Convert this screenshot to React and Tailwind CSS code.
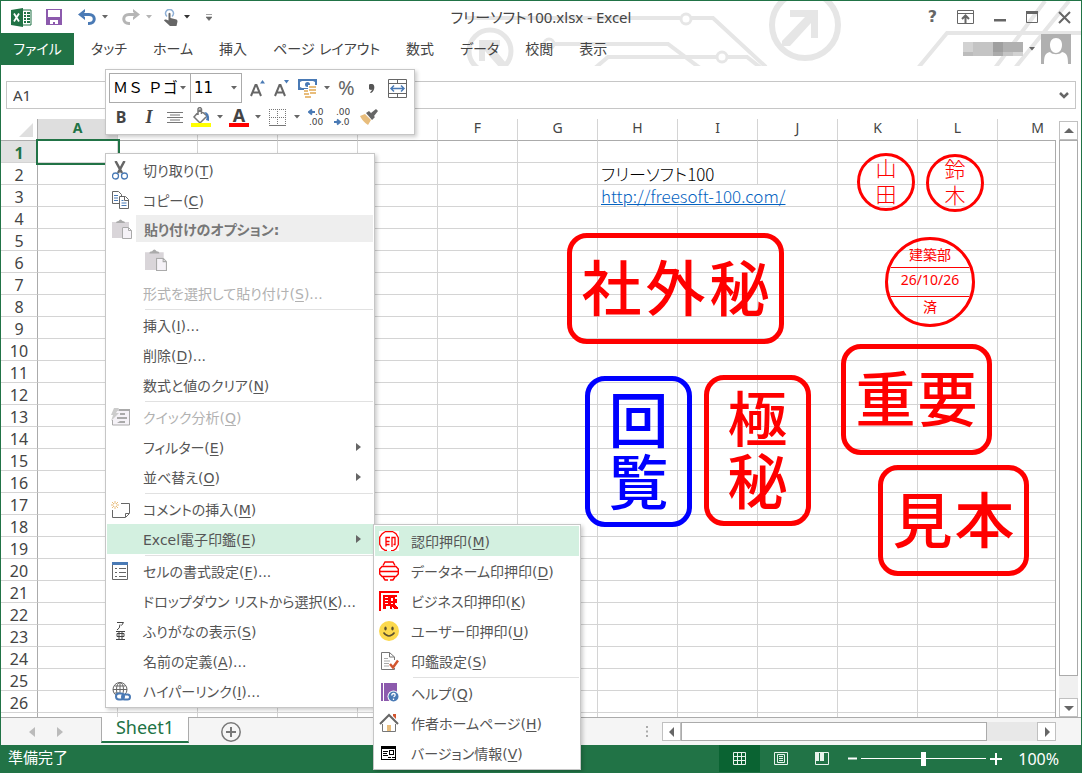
import clsx from 'clsx';
import { useState } from 'react';

const tabs = ['タッチ', 'ホーム', '挿入', 'ページ レイアウト', '数式', 'データ', '校閲', '表示'];
const columns = ['A', 'B', 'C', 'D', 'E', 'F', 'G', 'H', 'I', 'J', 'K', 'L', 'M'];
const rows = Array.from({ length: 26 }, (_, index) => index + 1);

const cells = {
  H2: { span: 2, text: 'フリーソフト100' },
  H3: { span: 3, text: 'http://freesoft-100.com/', href: 'http://freesoft-100.com/' }
};

const cellMenu = [
  { label: '切り取り', hotkey: 'T', icon: CutIcon },
  { label: 'コピー', hotkey: 'C', icon: CopyIcon },
  { heading: '貼り付けのオプション:' },
  { paste: true },
  { label: '形式を選択して貼り付け', hotkey: 'S', more: true, disabled: true },
  { divider: true },
  { label: '挿入', hotkey: 'I', more: true },
  { label: '削除', hotkey: 'D', more: true },
  { label: '数式と値のクリア', hotkey: 'N' },
  { divider: true },
  { label: 'クイック分析', hotkey: 'Q', disabled: true, icon: QuickIcon },
  { label: 'フィルター', hotkey: 'E', submenu: true },
  { label: '並べ替え', hotkey: 'O', submenu: true },
  { divider: true },
  { label: 'コメントの挿入', hotkey: 'M', icon: CommentIcon },
  { label: 'Excel電子印鑑', hotkey: 'E', submenu: true, active: true },
  { divider: true },
  { label: 'セルの書式設定', hotkey: 'F', more: true, icon: FormatIcon },
  { label: 'ドロップダウン リストから選択', hotkey: 'K', more: true },
  { label: 'ふりがなの表示', hotkey: 'S', icon: FuriganaIcon },
  { label: '名前の定義', hotkey: 'A', more: true },
  { label: 'ハイパーリンク', hotkey: 'I', more: true, icon: LinkIcon }
];

const stampMenu = [
  { label: '認印押印', hotkey: 'M', icon: SealIcon, active: true },
  { label: 'データネーム印押印', hotkey: 'D', icon: DateSealIcon },
  { label: 'ビジネス印押印', hotkey: 'K', icon: BusinessSealIcon },
  { label: 'ユーザー印押印', hotkey: 'U', icon: SmileIcon },
  { label: '印鑑設定', hotkey: 'S', icon: SettingsIcon },
  { divider: true },
  { label: 'ヘルプ', hotkey: 'Q', icon: HelpIcon },
  { label: '作者ホームページ', hotkey: 'H', icon: HomeIcon },
  { label: 'バージョン情報', hotkey: 'V', icon: VersionIcon }
];

export default function App() {
  return (
    <div className="relative flex h-screen min-h-[480px] flex-col overflow-hidden border border-[#217346] bg-white font-['DejaVu_Sans','Noto_Sans_CJK_JP',sans-serif] text-[15px] text-[#444] [font-feature-settings:'palt']">
      <header className="relative">
        <Circuit />
        <TitleBar />
        <RibbonTabs />
      </header>
      <FormulaBar />
      <Sheet />
      <SheetTabs />
      <StatusBar />
      <MiniToolbar />
      <Menu items={cellMenu} label="セル" className="top-[152px] left-[104px] w-[270px]" />
      <Menu items={stampMenu} label="Excel電子印鑑" className="top-[523px] left-[372px] w-[208px]" />
    </div>
  );
}

function Caret({ className = 'text-[#666]' }) {
  return (
    <svg width="6" height="4" viewBox="0 0 6 4" className={clsx('shrink-0', className)}>
      <path d="M0 0h6L3 3.500z" fill="currentColor" />
    </svg>
  );
}

function Circuit() {
  return (
    <svg width="632" height="65" viewBox="450 0 632 65" className="pointer-events-none absolute top-0 right-0" fill="none" stroke="#e6e6e6" strokeWidth="4">
      <circle cx="806" cy="24" r="33" strokeWidth="6" />
      <path d="M791 16V9h28v28h-7V22l-21 23h-8v-5l23-24z" fill="#e6e6e6" stroke="none" />
      <circle cx="491" cy="50" r="21" strokeWidth="5" />
      <path d="M501 45v-6h-21v21h6V50l14 16h7v-4l-14-17z" fill="#e6e6e6" stroke="none" />
      <path d="M466 17h215M691 17h23l53 49" />
      <circle cx="687" cy="18" r="5" strokeWidth="3" />
      <path d="M554 43h115l32 24M596 67l13-11h109M728 56h20l14 11" />
      <circle cx="550" cy="43" r="5" strokeWidth="3" />
      <circle cx="723" cy="56" r="5" strokeWidth="3" />
      <path d="M919 67l29-35h134M996 67l50-67M1016 67l54-67" />
    </svg>
  );
}

function TitleBar() {
  return (
    <div className="relative flex h-8 items-center justify-between">
      <div className="flex items-center pl-2.5">
        <ExcelIcon />
        <button type="button" aria-label="上書き保存" className="ml-3.5"><SaveIcon /></button>
        <button type="button" aria-label="元に戻す" className="ml-4 flex items-center gap-1.5">
          <UndoIcon className="text-[#4a7ab5]" />
          <Caret />
        </button>
        <button type="button" aria-label="やり直し" className="ml-3.5 flex items-center gap-1.5">
          <UndoIcon className="-scale-x-100 text-[#b5b5b5]" />
          <Caret className="text-[#b5b5b5]" />
        </button>
        <button type="button" aria-label="タッチ モード" className="ml-3 flex items-center gap-1.5">
          <TouchIcon />
          <Caret className="text-[#333]" />
        </button>
        <button type="button" aria-label="カスタマイズ" className="ml-4">
          <svg width="6" height="7" viewBox="0 0 6 7"><path d="M0 .5h6M0 3h6L3 6.500z" fill="#666" stroke="#666" strokeWidth=".6" /></svg>
        </button>
      </div>
      <h1 className="absolute inset-x-0 mx-auto w-fit font-['Noto_Sans','Noto_Sans_CJK_JP',sans-serif] text-[15px]">フリーソフト100.xlsx - Excel</h1>
      <div className="flex items-center gap-5 pr-2.5 text-[#666]">
        <button type="button" aria-label="ヘルプ" className="text-base leading-4 font-bold">?</button>
        <button type="button" aria-label="リボンの表示オプション">
          <svg width="17" height="14" viewBox="0 0 17 14" fill="none" stroke="currentColor"><path d="M.5.5h16v13H.5zM.5 3.500h16" /><path d="M8.500 13V6M5 9l3.500-3.500L12 9" strokeWidth="2" /></svg>
        </button>
        <button type="button" aria-label="最小化">
          <svg width="12" height="12" viewBox="0 0 12 12"><path d="M0 8h12v2.500H0z" fill="currentColor" /></svg>
        </button>
        <button type="button" aria-label="最大化">
          <svg width="12" height="12" viewBox="0 0 12 12"><path d="M.5 1.500h11v10H.5z" fill="none" stroke="currentColor" /><path d="M0 0h12v3H0z" fill="currentColor" /></svg>
        </button>
        <button type="button" aria-label="閉じる">
          <svg width="13" height="13" viewBox="0 0 13 13"><path d="M1 1l11 11M12 1L1 12" stroke="currentColor" strokeWidth="2" /></svg>
        </button>
      </div>
    </div>
  );
}

function RibbonTabs() {
  return (
    <div className="relative flex h-8 items-center text-sm">
      <nav className="flex h-full items-center">
        <button type="button" className="mr-1 h-full w-[73px] bg-[#217346] text-white">ファイル</button>
        {tabs.map((tab) => (
          <button key={tab} type="button" className="h-full px-[13px] whitespace-nowrap">{tab}</button>
        ))}
      </nav>
      <button type="button" aria-label="アカウント" className="ml-auto flex items-center gap-1.5 pr-2.5">
        <svg width="60" height="14" viewBox="0 0 60 14">
          <path d="M0 0h60v14H0z" fill="#c4c4c4" />
          <path d="M0 0h10v10H0z" fill="#d2d2d2" />
          <path d="M0 10h10v4H0z" fill="#bcbcbc" />
          <path d="M30 0h10v10H30z" fill="#9f9f9f" />
          <path d="M40 0h20v10H40z" fill="#b0b0b0" />
          <path d="M30 10h10v4H30z" fill="#ababab" />
          <path d="M50 10h10v4H50z" fill="#d2d2d2" />
        </svg>
        <Caret />
        <svg width="30" height="30" viewBox="0 0 30 30">
          <path d="M0 0h30v30H0z" fill="#b0b0b0" />
          <path d="M15 4c-4 0-6 3-6 7 0 5 3 8 6 8s6-3 6-8c0-4-2-7-6-7zM3 30c0-8 1-11 6-12 2 3 10 3 12 0 5 1 6 4 6 12z" fill="#fff" />
        </svg>
      </button>
    </div>
  );
}

function FormulaBar() {
  return (
    <div className="mt-4 mb-2.5 flex h-7 gap-2 px-[5px]">
      <input aria-label="名前ボックス" defaultValue="A1" className="w-[104px] border border-[#c6c6c6] px-1.5 font-['Noto_Sans',sans-serif] outline-none" />
      <div className="flex flex-1 items-center border border-[#c6c6c6] pr-1.5">
        <input aria-label="数式バー" className="h-full flex-1 outline-none" />
        <svg width="10" height="7" viewBox="0 0 10 7"><path d="M1 1l4 4 4-4" fill="none" stroke="#666" strokeWidth="2.500" /></svg>
      </div>
    </div>
  );
}

function Sheet() {
  return (
    <main className="flex min-h-0 flex-1">
      <div className="relative min-w-0 flex-1 overflow-hidden">
        <table className="w-[1077px] table-fixed border-separate border-spacing-0">
          <colgroup>
            <col className="w-[37px]" />
            {columns.map((name) => <col key={name} className="w-20" />)}
          </colgroup>
          <thead>
            <tr className="h-[22px]">
              <th aria-label="すべて選択" className="border-r border-b border-[#ababab] p-0">
                <svg width="14" height="14" viewBox="0 0 14 14" className="mr-1 ml-auto"><path d="M14 0v14H0z" fill="#dfdfdf" /></svg>
              </th>
              {columns.map((name) => (
                <th
                  key={name}
                  scope="col"
                  className={clsx(
                    "h-[22px] border-r border-b border-r-[#d4d4d4] border-b-[#ababab] p-0 align-top font-['Noto_Sans',sans-serif] text-sm leading-[18px]",
                    name === 'A' ? 'bg-[#dedede] font-bold text-[#217346]' : 'font-normal'
                  )}
                >
                  {name}
                </th>
              ))}
            </tr>
          </thead>
          <tbody>
            {rows.map((row) => <SheetRow key={row} row={row} />)}
            <SheetRow />
          </tbody>
        </table>
        <div className="pointer-events-none absolute inset-y-0 right-0 mt-[21px] border-r border-[#ababab]" />
        <Stamps />
      </div>
      <div className="flex w-[25px] flex-col items-center pt-0.5">
        <ScrollButton label="上へ" d="M4 11h10l-5-5z" />
        <div className="flex w-[19px] flex-1 flex-col bg-[#f0f0f0]">
          <div className="h-[96%] border border-[#ababab] bg-white" />
        </div>
        <ScrollButton label="下へ" d="M4 7h10l-5 5z" />
      </div>
    </main>
  );
}

function SheetRow({ row }) {
  const items = [];
  for (let index = 0; index < columns.length; index += 1) {
    const key = `${columns[index]}${row}`;
    const cell = cells[key];
    items.push(
      <td
        key={key}
        colSpan={cell?.span}
        className={clsx(
          "h-[22px] border-r border-b border-[#d4d4d4] p-0 pt-px pl-[3px] font-['Noto_Sans_CJK_JP',sans-serif] text-[17px] leading-5 font-light whitespace-nowrap text-black",
          key === 'A1' && 'outline-2 outline-[#217346]'
        )}
      >
        {cell?.href ? <a href={cell.href} className="text-[#0563c1] underline">{cell.text}</a> : cell?.text}
      </td>
    );
    if (cell) index += cell.span - 1;
  }

  return (
    <tr>
      <th
        scope="row"
        className={clsx(
          "h-[22px] border-r border-b border-r-[#ababab] border-b-[#d4d4d4] p-0 pt-[3px] font-['Noto_Sans',sans-serif] text-base leading-[18px]",
          row === 1 ? 'bg-[#e1e1e1] font-bold text-[#217346]' : 'font-normal'
        )}
      >
        {row}
      </th>
      {items}
    </tr>
  );
}

// Seals are floating shapes, placed freely over the cells.
function Stamps() {
  return (
    <div className="font-['Noto_Sans_CJK_JP',sans-serif] text-[#f00] [font-feature-settings:normal]">
      <BoxStamp text="社外秘" className="top-[114px] left-[566px] h-[111px] w-[217px] gap-1 font-medium" />
      <BoxStamp text="重要" className="top-[225px] left-[840px] h-[111px] w-[151px] gap-0.5 font-medium" />
      <BoxStamp text="見本" className="top-[346px] left-[877px] h-[111px] w-[151px] gap-0.5 font-medium" />
      <BoxStamp text="回覧" vertical className="top-[257px] left-[584px] h-[151px] w-[107px] gap-0.5 font-medium text-[#00f]" />
      <BoxStamp text="極秘" vertical className="top-[256px] left-[703px] h-[151px] w-[107px] gap-0.5 font-medium" />
      <NameStamp text="山田" className="top-[34px] left-[856px]" />
      <NameStamp text="鈴木" className="top-[35px] left-[925px]" />
      <div className="absolute top-[118px] left-[884px] flex size-[90px] flex-col overflow-hidden rounded-full border-3 border-[#f00] text-center text-sm">
        <span className="flex h-[27px] items-center justify-center leading-6">建築部</span>
        <span className="h-[30px] border-y border-[#f00] font-['Noto_Sans',sans-serif] leading-6">26/10/26</span>
        <span className="leading-[18px]">済</span>
      </div>
    </div>
  );
}

function BoxStamp({ text, vertical, className }) {
  return (
    <div className={clsx('absolute flex items-center justify-center rounded-[20px] border-5 border-current pb-2 text-[60px] leading-[60px]', vertical && 'flex-col', className)}>
      {[...text].map((char) => <span key={char}>{char}</span>)}
    </div>
  );
}

function NameStamp({ text, className }) {
  return (
    <div className={clsx('absolute flex size-[58px] flex-col items-center justify-center rounded-full border-3 border-[#f00] pb-1 text-[21px] leading-[26px] font-light', className)}>
      {[...text].map((char) => <span key={char}>{char}</span>)}
    </div>
  );
}

function ScrollButton({ label, d }) {
  return (
    <button type="button" aria-label={label} className="flex size-[19px] shrink-0 items-center justify-center border border-[#c0c0c0] bg-white">
      <svg width="18" height="18" viewBox="0 0 18 18" className="shrink-0"><path d={d} fill="#666" /></svg>
    </button>
  );
}

function SheetTabs() {
  return (
    <div className="flex h-7 items-start border-t border-[#ababab] bg-[#f5f5f5]">
      <div className="flex w-[100px] items-center gap-[22px] self-center pl-7 text-[#bbb]">
        <button type="button" aria-label="前のシート"><svg width="6" height="10" viewBox="0 0 6 10"><path d="M6 0v10L0 5z" fill="currentColor" /></svg></button>
        <button type="button" aria-label="次のシート"><svg width="6" height="10" viewBox="0 0 6 10"><path d="M0 0v10l6-5z" fill="currentColor" /></svg></button>
      </div>
      <button type="button" className="-mt-px h-[26px] w-[88px] border-x border-b-2 border-x-[#ababab] border-b-[#217346] bg-white pb-1 font-['Noto_Sans',sans-serif] text-lg leading-5 text-[#217346]">Sheet1</button>
      <button type="button" aria-label="新しいシート" className="ml-8 self-center">
        <svg width="20" height="20" viewBox="0 0 20 20" fill="none" stroke="#777"><circle cx="10" cy="10" r="9.200" strokeWidth="1.500" /><path d="M10 5v10M5 10h10" strokeWidth="2" /></svg>
      </button>
      <div className="ml-auto flex w-[435px] items-center self-center">
        <svg width="2" height="11" viewBox="0 0 2 11" className="mr-3.5"><path d="M0 0h2v2H0zM0 4.500h2v2H0zM0 9h2v2H0z" fill="#ababab" /></svg>
        <ScrollButton label="左へ" d="M11 4v10l-5-5z" />
        <div className="flex h-[19px] flex-1 bg-[#e8e8e8]"><div className="w-[86%] border border-[#ababab] bg-white" /></div>
        <ScrollButton label="右へ" d="M7 4v10l5-5z" />
        <div className="w-[25px]" />
      </div>
    </div>
  );
}

function StatusBar() {
  const [zoom, setZoom] = useState(100);
  return (
    <footer className="flex h-[27px] items-center bg-[#217346] pr-[22px] pl-[7px] text-white">
      <span>準備完了</span>
      <div className="ml-auto flex h-full items-center">
        <button type="button" aria-label="標準" className="flex h-full w-[41px] items-center justify-center bg-[#0a6332]">
          <svg width="13" height="13" viewBox="0 0 13 13" fill="none" stroke="#e8f3ec"><path d="M.5.5h12v12H.5zM4.500 0v13M8.500 0v13M0 4.500h13M0 8.500h13" /></svg>
        </button>
        <button type="button" aria-label="ページ レイアウト" className="flex w-[41px] justify-center">
          <svg width="14" height="13" viewBox="0 0 14 13" fill="none" stroke="#e8f3ec"><path d="M.5.5h13v12H.5zM3.500 2.500h7v8h-7zM5 4.500h4M5 6.500h4M5 8.500h4" /></svg>
        </button>
        <button type="button" aria-label="改ページ プレビュー" className="flex w-[41px] justify-center">
          <svg width="14" height="13" viewBox="0 0 14 13"><path d="M.5.5h13v12H.5z" fill="none" stroke="#e8f3ec" /><path d="M0 0h4v9H0zM5 0h4v9H5z" fill="#e8f3ec" /></svg>
        </button>
        <button type="button" aria-label="縮小" className="ml-1.5" onClick={() => setZoom(zoom - 10)}>
          <svg width="9" height="9" viewBox="0 0 9 9"><path d="M0 3.500h9v2H0z" fill="#fff" /></svg>
        </button>
        <input
          type="range"
          aria-label="ズーム"
          min="10"
          max="190"
          value={zoom}
          onChange={(event) => setZoom(Number(event.target.value))}
          className="mx-1 h-4 w-[125px] appearance-none bg-transparent [&::-webkit-slider-runnable-track]:h-px [&::-webkit-slider-runnable-track]:bg-white [&::-webkit-slider-thumb]:-mt-1.5 [&::-webkit-slider-thumb]:h-3.5 [&::-webkit-slider-thumb]:w-[5px] [&::-webkit-slider-thumb]:appearance-none [&::-webkit-slider-thumb]:bg-white"
        />
        <button type="button" aria-label="拡大" onClick={() => setZoom(zoom + 10)}>
          <svg width="12" height="12" viewBox="0 0 12 12"><path d="M0 5h12v2H0zM5 0h2v12H5z" fill="#fff" /></svg>
        </button>
        <span className="ml-4 font-['Noto_Sans',sans-serif] text-base">{zoom}%</span>
      </div>
    </footer>
  );
}

function MiniToolbar() {
  return (
    <div className="absolute top-[68px] left-[104px] flex w-[310px] flex-col border border-[#c6c6c6] bg-white p-[3px] shadow-[2px_2px_4px_rgba(0,0,0,0.2)]">
      <div className="flex h-[30px] items-center">
        <Picker label="フォント" value="ＭＳ Ｐゴ" className="w-[82px] [font-feature-settings:normal]" />
        <Picker label="フォント サイズ" value="11" className="-ml-px w-[52px]" />
        <button type="button" aria-label="フォント サイズの拡大" className="ml-2"><GrowIcon d="M10 3.500h5L12.500 0z" /></button>
        <button type="button" aria-label="フォント サイズの縮小" className="ml-2"><GrowIcon d="M10 0h5l-2.500 3.500z" /></button>
        <button type="button" aria-label="通貨表示形式" className="ml-2 flex items-center gap-1.5"><MoneyIcon /><Caret /></button>
        <button type="button" aria-label="パーセント スタイル" className="ml-2 font-['Noto_Sans',sans-serif] text-xl leading-5 text-[#666]">%</button>
        <button type="button" aria-label="桁区切りスタイル" className="ml-3.5">
          <svg width="7" height="9" viewBox="0 0 7 9"><path d="M3 0a3 3 0 1 0 .5 5.500L1 8.500 2 9c4-2 4.500-9 1-9z" fill="#555" /></svg>
        </button>
        <button type="button" aria-label="セルを結合して中央揃え" className="ml-3"><MergeIcon /></button>
      </div>
      <div className="flex h-7 items-center text-[#444]">
        <button type="button" aria-label="太字" className="ml-1.5 w-3 font-['Noto_Sans',sans-serif] text-base leading-5 font-bold">B</button>
        <button type="button" aria-label="斜体" className="ml-4 w-3 font-['Liberation_Serif',serif] text-lg leading-5 font-bold italic">I</button>
        <button type="button" aria-label="中央揃え" className="ml-3">
          <svg width="16" height="11" viewBox="0 0 16 11"><path d="M0 .5h16M3 3h10M0 5.500h16M3 8h10M0 10.500h16" stroke="#777" /></svg>
        </button>
        <button type="button" aria-label="塗りつぶしの色" className="ml-2 flex items-center gap-1.5"><FillIcon /><Caret /></button>
        <button type="button" aria-label="フォントの色" className="ml-1.5 flex items-center gap-1.5">
          <span className="w-5 border-b-4 border-[#f00] font-['Noto_Sans',sans-serif] text-lg leading-4 font-bold">A</span>
          <Caret />
        </button>
        <button type="button" aria-label="罫線" className="ml-2 flex items-center gap-2"><BorderIcon /><Caret /></button>
        <button type="button" aria-label="小数点以下の表示桁数を増やす" className="ml-2"><DecimalIcon /></button>
        <button type="button" aria-label="小数点以下の表示桁数を減らす" className="ml-2.5"><DecimalIcon less /></button>
        <button type="button" aria-label="書式のコピー/貼り付け" className="ml-2.5"><BrushIcon /></button>
      </div>
    </div>
  );
}

function Picker({ label, value, className }) {
  return (
    <div className={clsx('relative h-[30px] border border-[#ababab]', className)}>
      <select aria-label={label} className="h-full w-full appearance-none bg-transparent pr-2 pl-[3px] text-black outline-none">
        <option>{value}</option>
      </select>
      <Caret className="pointer-events-none absolute top-3 right-1 text-[#666]" />
    </div>
  );
}

function Menu({ items, label, className }) {
  return (
    <ul role="menu" aria-label={label} className={clsx('absolute border border-[#c6c6c6] bg-white p-px text-sm text-[#555] shadow-[2px_2px_4px_rgba(0,0,0,0.2)]', className)}>
      {items.map((item, index) => <MenuItem key={index} item={item} />)}
    </ul>
  );
}

function MenuItem({ item }) {
  if (item.divider) {
    return <li role="separator" className="ml-[38px] h-0.5 border-b border-[#e1e1e1]" />;
  }
  if (item.heading) {
    return (
      <li className="flex h-[27px] items-center">
        <span className="w-[29px] pl-[5px]"><PasteIcon size={20} /></span>
        <strong className="flex h-full flex-1 items-center bg-[#eee] pt-0.5 pl-2 text-[#777]">{item.heading}</strong>
      </li>
    );
  }
  if (item.paste) {
    return (
      <li role="menuitem" className="flex h-9 items-center pl-[38px]">
        <button type="button" aria-label="貼り付け" disabled><PasteIcon size={22} /></button>
      </li>
    );
  }

  const Icon = item.icon;
  return (
    <li role="none">
      <button
        type="button"
        role="menuitem"
        disabled={item.disabled}
        className={clsx(
          'flex h-[30px] w-full items-center pr-3 text-left whitespace-nowrap disabled:text-[#b1b1b1]',
          item.active && 'bg-[#d3f0e0]'
        )}
      >
        <span className="w-9 shrink-0 pl-1">{Icon && <Icon />}</span>
        <span className="pt-0.5">
          {item.label}(<u className="underline-offset-2">{item.hotkey}</u>){item.more && '...'}
        </span>
        {item.submenu && (
          <svg width="5" height="8" viewBox="0 0 5 8" className="ml-auto"><path d="M0 0v8l5-4z" fill="#666" /></svg>
        )}
      </button>
    </li>
  );
}

function ExcelIcon() {
  return (
    <svg width="21" height="19" viewBox="0 0 21 19">
      <path d="M11 2h9v15h-9" fill="#fff" stroke="#217346" />
      <path d="M13 5h2M16 5h3M13 8h2M16 8h3M13 11h2M16 11h3M13 14h2M16 14h3" stroke="#217346" strokeWidth="2" />
      <path d="M0 2l12-2v19L0 17z" fill="#217346" />
      <path d="M3 5.500l5 8M8 5.500l-5 8" stroke="#fff" strokeWidth="1.800" />
    </svg>
  );
}

function SaveIcon() {
  return (
    <svg width="16" height="16" viewBox="0 0 16 16">
      <path d="M0 0h16v16H0z" fill="#8c5aad" />
      <path d="M2 1h12v7H2zM4 11h8v4H9v-2H7v2H4z" fill="#fff" />
    </svg>
  );
}

function UndoIcon({ className }) {
  return (
    <svg width="18" height="16" viewBox="0 0 18 16" className={className}>
      <path d="M7 0v3L4 5.500 7 8v3L0 5.500z" fill="currentColor" />
      <path d="M4 5.500h7c7 0 7 9 0 9h-1" fill="none" stroke="currentColor" strokeWidth="3" />
    </svg>
  );
}

function TouchIcon() {
  return (
    <svg width="14" height="17" viewBox="0 0 14 17">
      <path d="M3 7.500a4 4 0 1 1 5 0" fill="none" stroke="#8fb0d6" strokeWidth="1.500" />
      <path d="M4.500 4.500q1-1.500 2 0V9l6 1.500q1 .5 1 2L12.500 17H6L0 11.500q.5-1.500 2-1l2.500 1z" fill="#666" />
    </svg>
  );
}

function GrowIcon({ d }) {
  return (
    <svg width="16" height="17" viewBox="0 0 16 17">
      <path d="M1 16L5.500 5h1L11 16M3 12.500h6" fill="none" stroke="#666" strokeWidth="2" />
      <path d={d} fill="#4a7ab5" />
    </svg>
  );
}

function MoneyIcon() {
  return (
    <svg width="20" height="19" viewBox="0 0 20 19">
      <path d="M0 0h19v11H0z" fill="#4a7ab5" />
      <path d="M2 3l2-1h11l2 1v5l-2 1H4L2 8z" fill="#fff" />
      <circle cx="9.500" cy="5.500" r="2.500" fill="#4a7ab5" />
      <path d="M10 6h9v10h-3v3H6v-9h4z" fill="#fff" />
      <path d="M11 7h7v2h-7zM11 10h7v2h-7zM12 13h6v2h-6zM6 11h4v2H6zM6 14h5v2H6zM7 17h6v2H7z" fill="#e8bd7c" />
    </svg>
  );
}

function MergeIcon() {
  return (
    <svg width="19" height="19" viewBox="0 0 19 19" fill="none">
      <path d="M.5.5h18v18H.5zM0 4.500h19M0 14.500h19M9.500 0v5M9.500 14v5" stroke="#666" />
      <path d="M3 9.500h13M6 6.500l-3 3 3 3M13 6.500l3 3-3 3" stroke="#4a7ab5" strokeWidth="1.500" />
    </svg>
  );
}

function FillIcon() {
  return (
    <svg width="20" height="20" viewBox="0 0 20 20" fill="none">
      <path d="M9 3l7 6-7 7-6-6zM7 8V2q2-3 3.500 0v5" stroke="#777" strokeWidth="1.500" />
      <path d="M13 5q6 0 5 9l-3-1q2-4-2-8z" fill="#4a7ab5" />
      <path d="M0 16h20v4H0z" fill="#ff0" />
    </svg>
  );
}

function BorderIcon() {
  return (
    <svg width="17" height="17" viewBox="0 0 17 17" fill="none" stroke="#777">
      <path d="M.5 0v16M8.500 0v16M16.500 0v16M0 .5h17M0 8.500h17" strokeDasharray="1 1" />
      <path d="M0 16.500h17" />
    </svg>
  );
}

function DecimalIcon({ less }) {
  return (
    <svg width="16" height="18" viewBox="0 0 16 18" fill="#444" fontSize="9" fontFamily="DejaVu Sans">
      <text x={less ? 2 : 7} y="7">{less ? '.00' : '.0'}</text>
      <text x={less ? 7 : 1} y="17">{less ? '.0' : '.00'}</text>
      <path d={less ? 'M0 14h6M3 11.500l3 2.500-3 2.500' : 'M7 4H1M4 1.500L1 4l3 2.500'} fill="none" stroke="#4a7ab5" strokeWidth="2" />
    </svg>
  );
}

function BrushIcon() {
  return (
    <svg width="18" height="16" viewBox="0 0 18 16">
      <path d="M0 7l5-2 6 6-3 5q-5-3-8-9z" fill="#e8bd7c" />
      <path d="M6 4l3-2 6 6-3 3zM11 4l5-4 2 2-4 5z" fill="#666" />
    </svg>
  );
}

function CutIcon() {
  return (
    <svg width="16" height="19" viewBox="0 0 16 19" fill="none" className="ml-px">
      <path d="M3.500 0l6.500 12M12.500 0L6 12" stroke="#666" strokeWidth="2.500" />
      <circle cx="3.500" cy="15" r="3" stroke="#4a7ab5" strokeWidth="1.300" />
      <circle cx="12.500" cy="15" r="3" stroke="#4a7ab5" strokeWidth="1.300" />
    </svg>
  );
}

function CopyIcon() {
  return (
    <svg width="17" height="18" viewBox="0 0 17 18" stroke="#666" fill="#fff" className="ml-px">
      <path d="M.5.5h6l3 3v9h-9z" />
      <path d="M2 4.500h4M2 7h4M2 9.500h4" stroke="#4a7ab5" />
      <path d="M7.500 5.500h6l3 3v9h-9z" />
      <path d="M12.500 5.500v4h4" fill="none" />
      <path d="M9.500 9.500h2M9.500 12h5M9.500 14.500h5" stroke="#4a7ab5" />
    </svg>
  );
}

function PasteIcon({ size }) {
  return (
    <svg width={size} height={size} viewBox="0 0 20 20">
      <path d="M0 3h17v5h-7v11H0z" fill="#d9d5d9" />
      <path d="M4 4q0-2 2.500-2Q8.500-1 10.500 2 13 2 13 4z" fill="#aaa" />
      <path d="M10.500 8.500h6l3 3v8h-9zM16.500 8.500v3h3" fill="#f5f2f7" stroke="#aaa" />
    </svg>
  );
}

function QuickIcon() {
  return (
    <svg width="19" height="18" viewBox="0 0 19 18">
      <path d="M5 2h13.500v15H1.500v-5" fill="#f5f2f7" stroke="#aaa" />
      <path d="M8 1h11v2H8zM9 5h5v2H9zM6 9h10v2H6zM9 13h5v2H6z" fill="#aaa" />
      <path d="M3 0h5L5 5h3L0 13l2-6H0z" fill="#ccc" />
    </svg>
  );
}

function CommentIcon() {
  return (
    <svg width="19" height="17" viewBox="0 0 19 17" fill="none">
      <path d="M10 2.500h8.500v10l-4 4H1.500V9M18 12.500h-3.500V16" stroke="#666" />
      <path d="M4 0v8M0 4h8M1 1l6 6M7 1L1 7" stroke="#e8bd7c" />
      <circle cx="4" cy="4" r="1.500" fill="#fff" />
    </svg>
  );
}

function FormatIcon() {
  return (
    <svg width="17" height="18" viewBox="0 0 17 18" fill="none" className="ml-px">
      <path d="M.5.5h15v17H.5z" stroke="#666" />
      <path d="M0 0h16v3H0z" fill="#4a7ab5" />
      <path d="M7 6.500h7M7 10.500h7M7 14.500h7M3 6.500h2M3 10.500h2M3 14.500h2" stroke="#666" />
    </svg>
  );
}

function FuriganaIcon() {
  return (
    <svg width="18" height="20" viewBox="0 0 18 20" fill="none" stroke="#444">
      <path d="M6 1.500h6.500l-2 3M9 3.500q0 4-3 5.500M5 10.500h9M5 18.500h9M8 10v8M11 10v8M6 12.500h7v3H6z" />
    </svg>
  );
}

function LinkIcon() {
  return (
    <svg width="19" height="19" viewBox="0 0 19 19" fill="none" className="ml-px">
      <circle cx="8" cy="7.500" r="7" stroke="#666" />
      <path d="M8 .5v14M1 7.500h14M2.500 4h11M2.500 11h5" stroke="#666" />
      <ellipse cx="8" cy="7.500" rx="3.500" ry="7" stroke="#666" />
      <rect x="4" y="11.500" width="8" height="6" rx="3" fill="#fff" stroke="#4a7ab5" strokeWidth="2" />
      <rect x="10" y="12.500" width="8" height="5" rx="2.500" stroke="#4a7ab5" strokeWidth="2" />
    </svg>
  );
}

function SealIcon() {
  return (
    <svg width="20" height="20" viewBox="0 0 20 20" fill="none" stroke="#f00">
      <path d="M0 0h20v20H0z" fill="#fff" stroke="none" />
      <path d="M6 .7h8M14 .7l3 2 2.300 4v7l-2.300 4-3 2H12M8 19.300H6l-3-2-2.300-4v-7L3 3l3-2.300" strokeWidth="1.300" />
      <path d="M11 6.500H7v9M7 10.500h3.500M7 13.500h3.500M13 16V6.500h3v7h-1.500" strokeWidth="1.300" />
    </svg>
  );
}

function DateSealIcon() {
  return (
    <svg width="20" height="20" viewBox="0 0 20 20" fill="none" stroke="#f00" strokeWidth="1.400">
      <path d="M4 4.500L6 1h8l2 3.500M4 16l2 3h3M11 19h3l2-3" />
      <path d="M3 5.500h14L19.300 8v5L17 15.500H3L.7 13V8zM.7 10.500h18.600" />
    </svg>
  );
}

function BusinessSealIcon() {
  return (
    <svg width="20" height="20" viewBox="0 0 20 20" shapeRendering="crispEdges">
      <path d="M0 0h20v2H2v18H0zM4 4h14v2h-2v2h2v4h-2v2l3 2v2h-4l-2-2v2h-2v-3H7v3H4z" fill="#f00" />
      <path d="M6 6h3v1H6zM6 9h3v1H6zM6 12h3v1H6zM12 7h2v3h-2zM12 12h2v1h-2z" fill="#fff" />
    </svg>
  );
}

function SmileIcon() {
  return (
    <svg width="20" height="20" viewBox="0 0 20 20">
      <circle cx="10" cy="10" r="10" fill="#fcd94d" />
      <ellipse cx="6.500" cy="7.500" rx="1.200" ry="2" fill="#5b5030" />
      <ellipse cx="13.500" cy="7.500" rx="1.200" ry="2" fill="#5b5030" />
      <path d="M4.500 11.500q5.500 7 11 0" fill="none" stroke="#5b5030" strokeWidth="1.500" />
    </svg>
  );
}

function SettingsIcon() {
  return (
    <svg width="20" height="20" viewBox="0 0 20 20" fill="none">
      <path d="M15.500 9V6l-5-4.500h-8v17h13V17M10.500 1.500V6h5" stroke="#777" />
      <path d="M5 7.500h4M5 10h6M5 12.500h5M5 15h5" stroke="#aaa" />
      <path d="M11 13l3 3.500 5-7" stroke="#d2552f" strokeWidth="2.500" />
    </svg>
  );
}

function HelpIcon() {
  return (
    <svg width="20" height="20" viewBox="0 0 20 20">
      <path d="M2 0h2v18H2zM5 0h13v18H5z" fill="#8c5aad" />
      <circle cx="14.500" cy="13.500" r="6" fill="#fff" />
      <circle cx="14.500" cy="13.500" r="5" fill="#4a7ab5" />
      <path d="M12.800 12.500q0-2 1.700-2t1.700 1.500q0 1-1.700 2M14.500 15.500v1.500" fill="none" stroke="#fff" strokeWidth="1.300" />
    </svg>
  );
}

function HomeIcon() {
  return (
    <svg width="20" height="20" viewBox="0 0 20 20" fill="none">
      <path d="M3.500 11v7.500h13V11" stroke="#777" />
      <path d="M1 11l9-9 9 9" stroke="#666" strokeWidth="2" />
      <path d="M14 1h3v5l-3-3z" fill="#d2552f" />
      <path d="M8 12h4v6H8z" fill="#e8bd7c" />
    </svg>
  );
}

function VersionIcon() {
  return (
    <svg width="19" height="16" viewBox="0 0 19 16" shapeRendering="crispEdges">
      <path d="M2 1h15v14H2z" fill="#000" />
      <path d="M3 4h13v10H3z" fill="#fff" />
      <path d="M4 6h5v1H4zM4 8h4v1H4zM4 10h5v1H4zM10 5h5v5h-5zM9 12h3v1H9zM13 12h3v1h-3z" fill="#000" />
      <path d="M11 6h3v3h-3z" fill="#fff" />
    </svg>
  );
}
